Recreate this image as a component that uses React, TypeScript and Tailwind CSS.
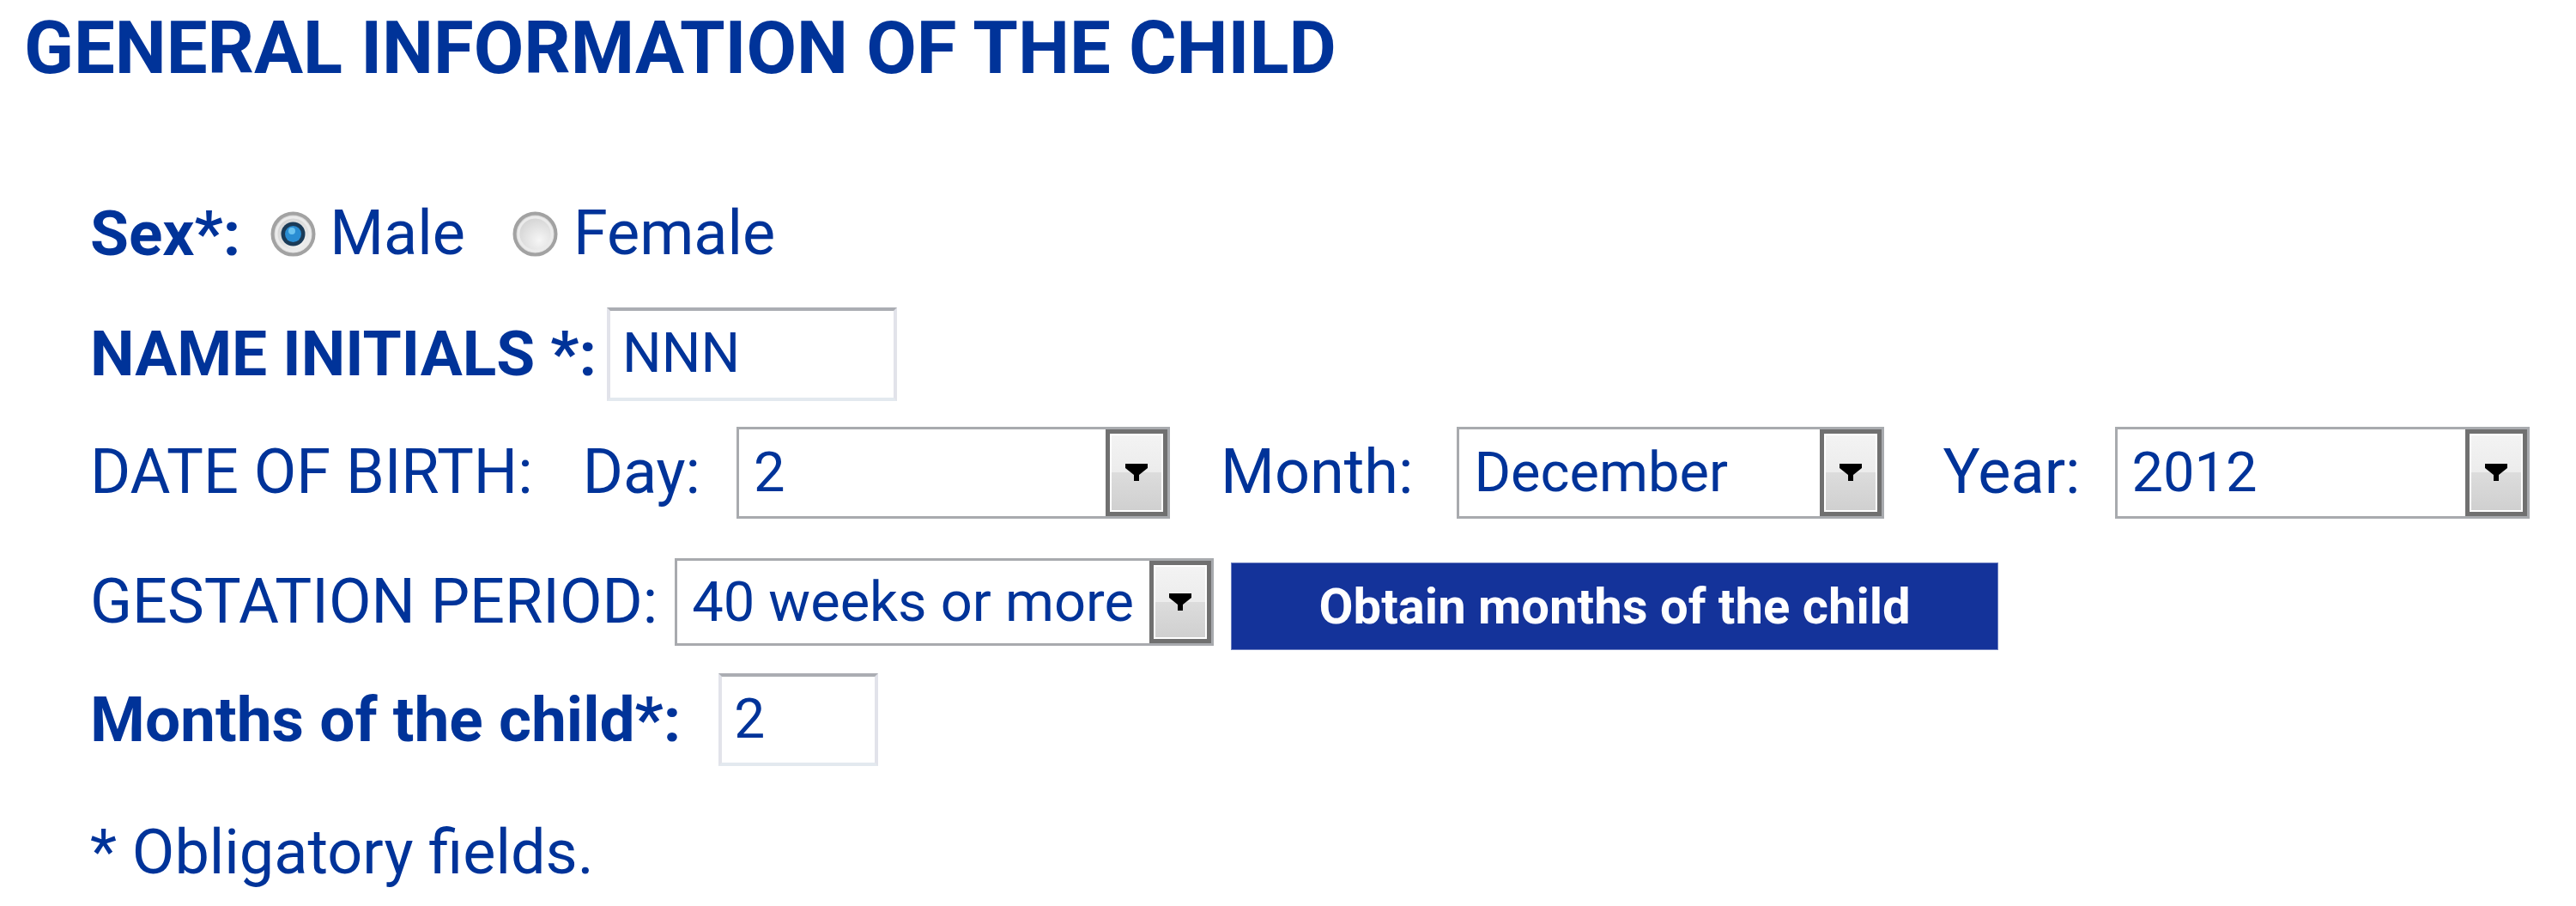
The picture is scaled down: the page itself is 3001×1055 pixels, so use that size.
import type { ReactNode } from "react";

const blue = "text-[#003399]";

function Radio({ checked }: { checked?: boolean }) {
  const id = checked ? "radio-on" : "radio-off";
  return (
    <svg width="53" height="53" viewBox="0 0 53 53" className="shrink-0">
      <defs>
        <radialGradient id={id} cx="60%" cy="65%" r="65%">
          <stop offset="0%" stopColor="#f6f6f6" />
          <stop offset="100%" stopColor="#cfcfcf" />
        </radialGradient>
      </defs>
      <circle cx="26.5" cy="26.5" r="24" fill={`url(#${id})`} stroke="#a2a2a2" strokeWidth="4" />
      <circle cx="26.5" cy="26.5" r="19.5" fill="none" stroke="#ebebeb" strokeWidth="3" />
      {checked && (
        <>
          <circle cx="26.5" cy="26.5" r="14" fill="#1b3b58" />
          <circle cx="26.5" cy="26.5" r="9.5" fill="#2a8dd3" />
          <circle cx="25" cy="23" r="4" fill="#6cc3f0" />
        </>
      )}
    </svg>
  );
}

function Arrow() {
  return (
    <svg width="26" height="20" viewBox="0 0 26 20">
      <path d="M0 0H26V5L16 13V20H10V13L0 5Z" fill="#000" />
    </svg>
  );
}

function FakeSelect({ value, className }: { value: string; className: string }) {
  return (
    <div className={`flex items-stretch border-[3px] border-[#a8aaae] bg-white ${className}`}>
      <div className={`flex flex-1 items-center pl-[17px] text-[65px] leading-none ${blue}`}>
        {value}
      </div>
      <div className="w-[72px] border-[5px] border-[#707070] bg-white p-[2px]">
        <div className="flex h-full items-center justify-center bg-[linear-gradient(to_bottom,#f3f3f3_0%,#ececec_50%,#dcdcdc_50%,#d0d0d0_100%)]">
          <Arrow />
        </div>
      </div>
    </div>
  );
}

function TextBox({ value, className }: { value: string; className: string }) {
  return (
    <div
      className={`flex items-center border-[4px] border-t-[#abadb3] border-x-[#e2e3ea] border-b-[#e3e9ef] bg-white pl-[14px] text-[64px] leading-none ${blue} ${className}`}
    >
      {value}
    </div>
  );
}

function Row({ className, children }: { className: string; children: ReactNode }) {
  return <div className={`flex h-[110px] items-center ${className}`}>{children}</div>;
}

export default function App() {
  return (
    <div className="h-[1055px] w-[3001px] overflow-hidden bg-white font-['Roboto',sans-serif]">
      <div className="flex h-[112px] items-center pl-[28px]">
        <h1 className={`text-[85px] font-bold leading-none ${blue}`}>
          GENERAL INFORMATION OF THE CHILD
        </h1>
      </div>

      <div className={`pl-[105px] text-[72px] leading-none ${blue}`}>
        <Row className="mt-[105px]">
          <span className="text-[73px] font-bold">Sex*:</span>
          <span className="ml-[35px] flex items-center">
            <Radio checked />
            <span className="ml-[16px]">Male</span>
          </span>
          <span className="ml-[55px] flex items-center">
            <Radio />
            <span className="ml-[18px]">Female</span>
          </span>
        </Row>

        <Row className="mt-[30px]">
          <span className="text-[73px] font-bold">NAME INITIALS *:</span>
          <TextBox value="NNN" className="ml-[12px] h-[109px] w-[338px]" />
        </Row>

        <Row className="mt-[28px]">
          <span>DATE OF BIRTH:</span>
          <span className="ml-[58px]">Day:</span>
          <FakeSelect value="2" className="ml-[42px] h-[107px] w-[505px]" />
          <span className="ml-[59px]">Month:</span>
          <FakeSelect value="December" className="ml-[51px] h-[107px] w-[498px]" />
          <span className="ml-[68px]">Year:</span>
          <FakeSelect value="2012" className="ml-[40px] h-[107px] w-[483px]" />
        </Row>

        <Row className="mt-[41px]">
          <span>GESTATION PERIOD:</span>
          <FakeSelect value="40 weeks or more" className="ml-[20px] h-[102px] w-[628px]" />
          <button
            type="button"
            className="ml-[20px] mt-[10px] flex h-[102px] w-[894px] items-center justify-center border border-[#6d7fc0] bg-[#14339a] text-[58px] font-bold leading-none text-white"
          >
            Obtain months of the child
          </button>
        </Row>

        <Row className="mt-[27px]">
          <span className="text-[73px] font-bold">Months of the child*:</span>
          <TextBox value="2" className="ml-[44px] h-[108px] w-[186px]" />
        </Row>

        <Row className="mt-[45px]">
          <span>* Obligatory fields.</span>
        </Row>
      </div>
    </div>
  );
}
